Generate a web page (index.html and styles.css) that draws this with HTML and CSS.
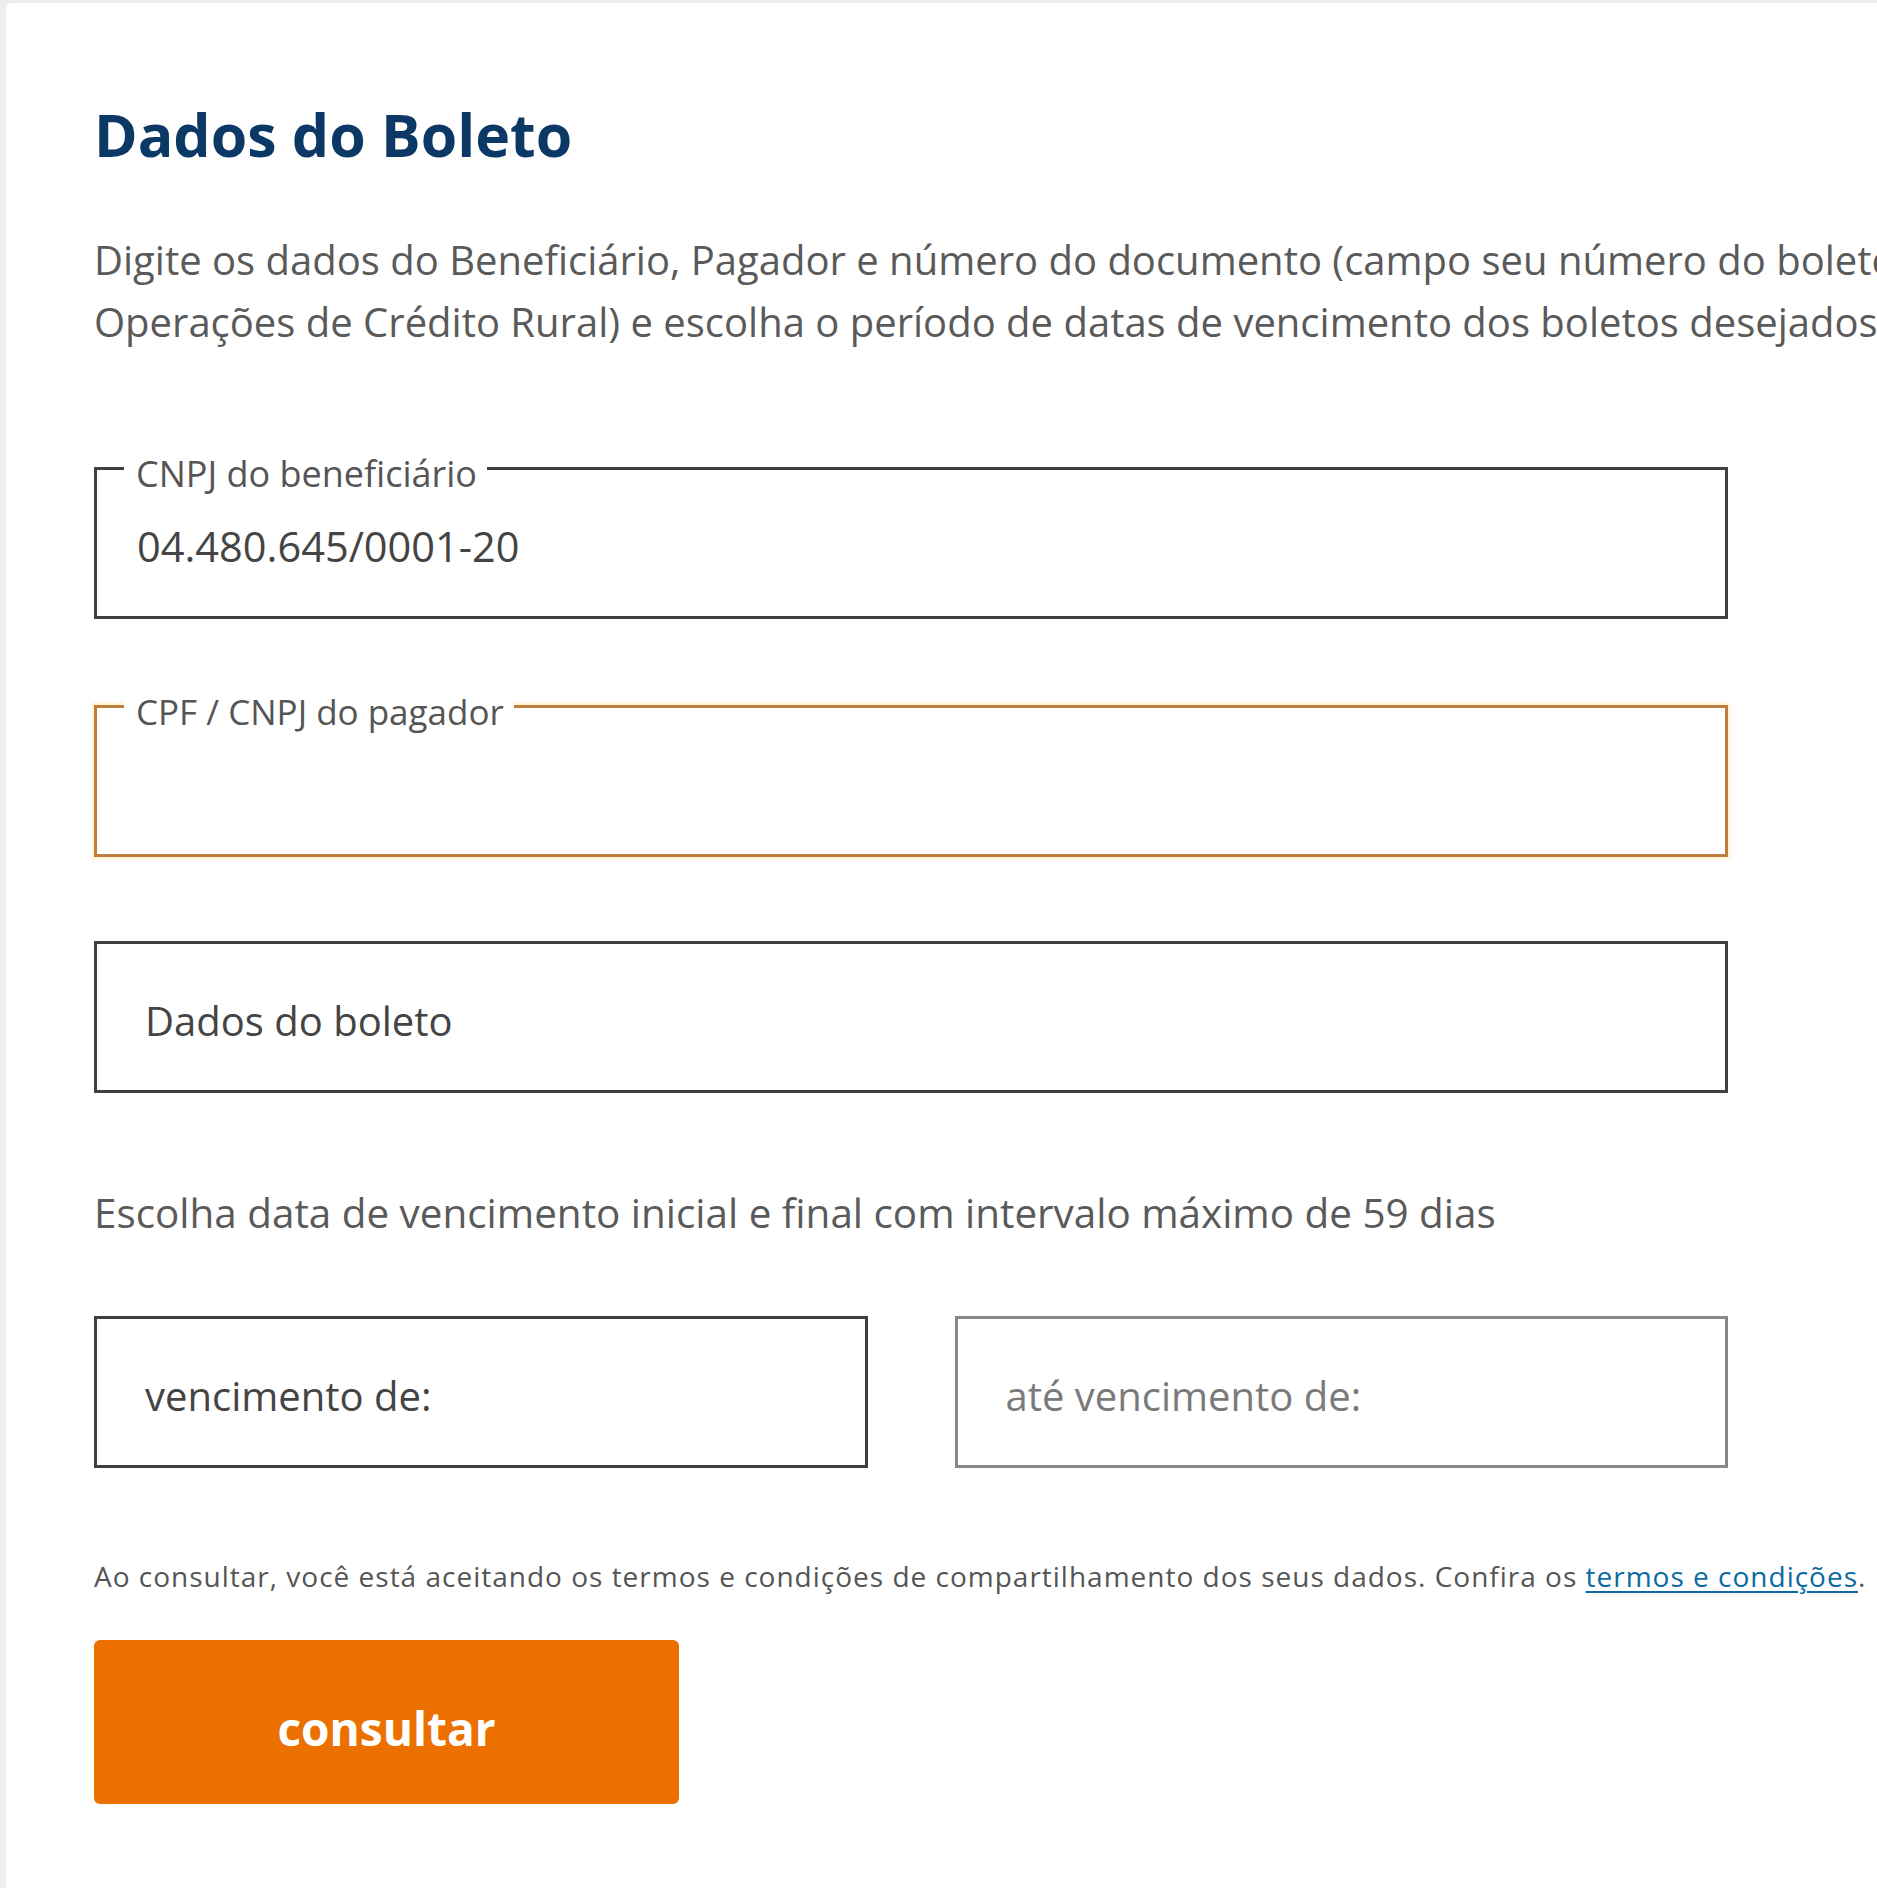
FILE: index.html
```html
<!DOCTYPE html>
<html lang="pt-BR">
<head>
<meta charset="utf-8">
<title>Dados do Boleto</title>
<link rel="stylesheet" href="styles.css">
</head>
<body>
<main class="card">
  <h1 class="title">Dados do Boleto</h1>
  <p class="intro">Digite os dados do Beneficiário, Pagador e número do documento (campo seu número do boleto<br>Operações de Crédito Rural) e escolha o período de datas de vencimento dos boletos desejados</p>

  <div class="field field-first">
    <span class="field-label">CNPJ do beneficiário</span>
    <span class="field-value">04.480.645/0001-20</span>
  </div>

  <div class="field field-focus">
    <span class="field-label label-narrow">CPF / CNPJ do pagador</span>
  </div>

  <div class="field field-plain">
    <span class="field-placeholder">Dados do boleto</span>
  </div>

  <p class="hint">Escolha data de vencimento inicial e final com intervalo máximo de 59 dias</p>

  <div class="dates">
    <div class="field field-date">
      <span class="field-placeholder">vencimento de:</span>
    </div>
    <div class="field field-date field-light">
      <span class="field-placeholder placeholder-light">até vencimento de:</span>
    </div>
  </div>

  <p class="terms">Ao consultar, você está aceitando os termos e condições de compartilhamento dos seus dados. Confira os <a class="terms-link" href="#">termos e condições</a>.</p>

  <button class="btn" type="button">consultar</button>
</main>
</body>
</html>
```

FILE: styles.css
```css
html, body {
  margin: 0;
  padding: 0;
}
body {
  background: #eeeeee;
  overflow: hidden;
  font-family: "Open Sans", "Noto Sans", sans-serif;
  color: #555;
}
.card {
  margin: 3px 0 0 6px;
  background: #ffffff;
  border-top-left-radius: 6px;
  min-height: 1885px;
  padding: 96px 0 0 88px;
  box-sizing: border-box;
}
.title {
  margin: 0;
  font-size: 59px;
  line-height: 70px;
  font-weight: 700;
  color: #0c3866;
}
.intro {
  margin: 60px 0 0 0;
  font-size: 40px;
  line-height: 62px;
  color: #5a5a5a;
  white-space: nowrap;
}
.field {
  position: relative;
  box-sizing: border-box;
  width: 1634px;
  height: 152px;
  border: 3px solid #3f3f3f;
  display: flex;
  align-items: center;
  padding: 6px 0 0 48px;
}
.field-first {
  margin-top: 114px;
  padding-left: 40px;
}
.field-focus {
  margin-top: 86px;
  border-color: #bf7d3f;
  box-shadow: 0 0 3px 2px #fff1c4;
}
.field-plain {
  margin-top: 84px;
}
.field-label {
  position: absolute;
  top: -19px;
  left: 27px;
  padding: 0 10px 0 12px;
  background: #fff;
  font-size: 36px;
  line-height: 46px;
  color: #555;
}
.label-narrow {
  font-size: 35px;
}
.field-value {
  font-size: 41.5px;
  color: #444;
}
.field-placeholder {
  font-size: 40px;
  color: #444;
}
.placeholder-light {
  color: #7a7a7a;
}
.hint {
  margin: 89px 0 0 0;
  font-size: 40.4px;
  line-height: 62px;
  color: #5a5a5a;
  white-space: nowrap;
}
.dates {
  margin-top: 72px;
  width: 1634px;
  display: grid;
  grid-template-columns: 1fr 1fr;
  column-gap: 87px;
}
.field-date {
  width: auto;
}
.field-light {
  border-color: #888;
}
.terms {
  margin: 88px 0 0 0;
  font-size: 28px;
  line-height: 40px;
  letter-spacing: 1px;
  color: #555;
  white-space: nowrap;
}
.terms-link {
  color: #0b6aa2;
  text-decoration: underline;
  text-decoration-thickness: 2px;
  text-underline-offset: 4px;
}
.btn {
  display: block;
  margin-top: 44px;
  width: 585px;
  height: 164px;
  border: none;
  border-radius: 6px;
  background: #ec7000;
  color: #fff;
  font-family: "Open Sans", "Noto Sans", sans-serif;
  font-size: 46px;
  font-weight: 700;
  padding: 12px 0 0 0;
  cursor: pointer;
}
```
